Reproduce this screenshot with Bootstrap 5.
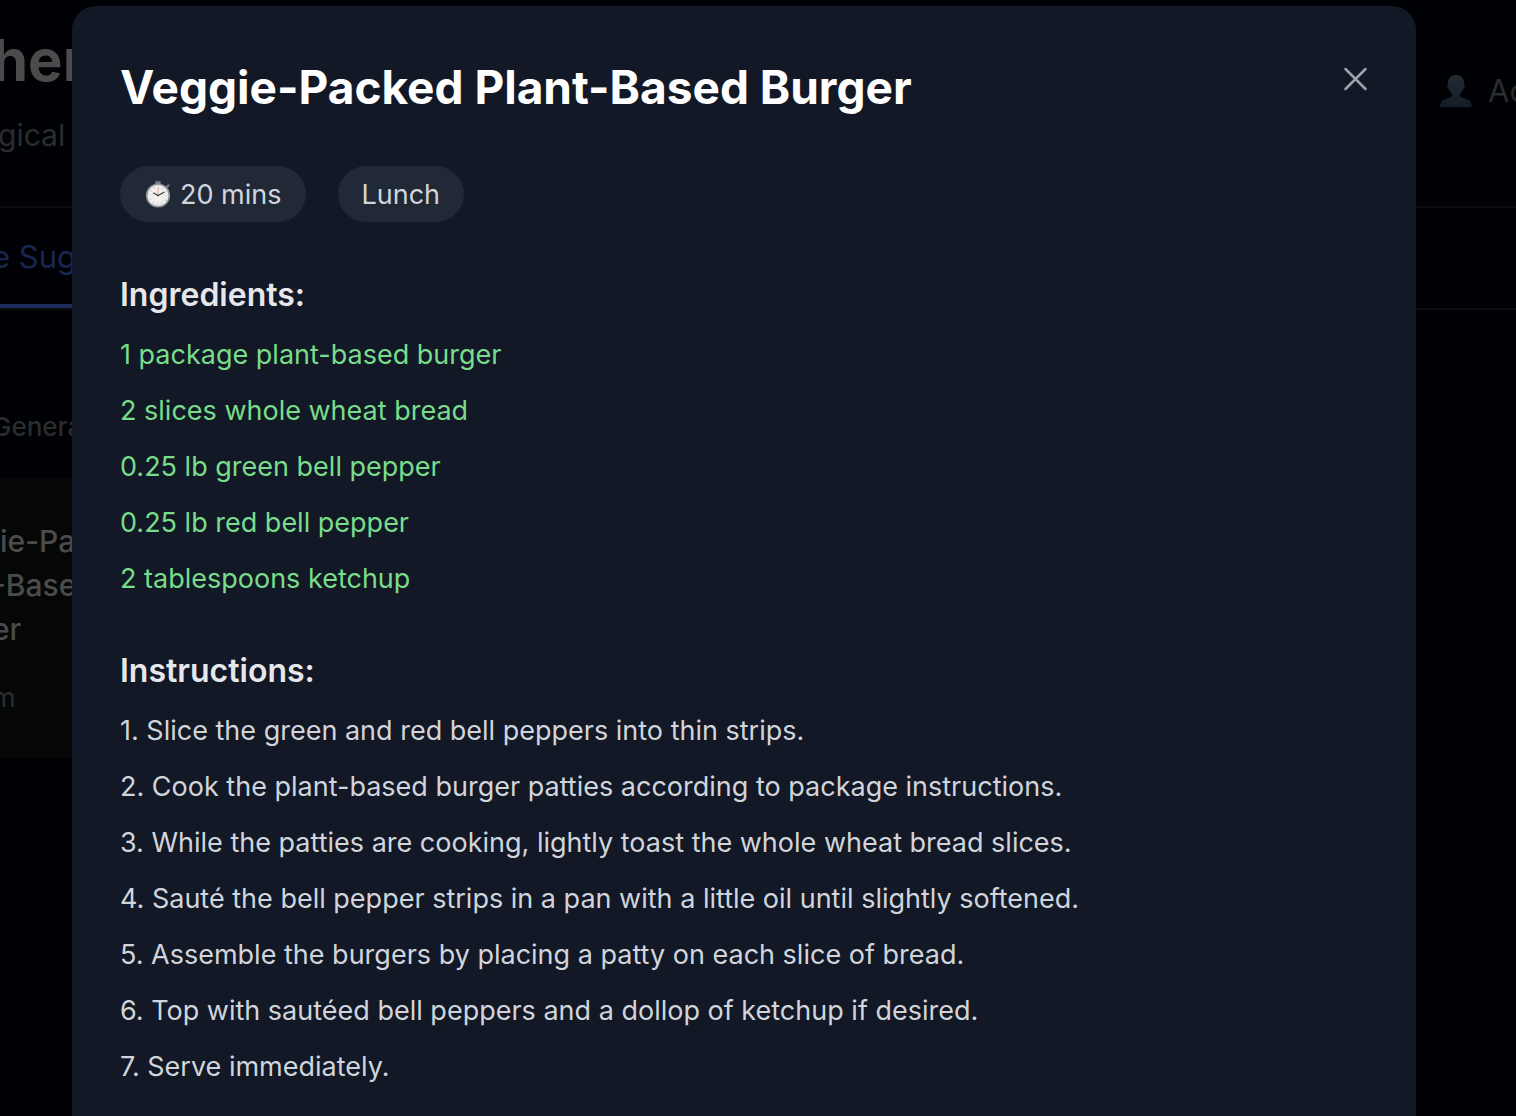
<!DOCTYPE html>
<html lang="en" data-bs-theme="dark">
<head>
<meta charset="utf-8">
<meta name="viewport" content="width=device-width, initial-scale=1">
<title>Veggie-Packed Plant-Based Burger</title>
<link href="https://cdn.jsdelivr.net/npm/bootstrap@5.3.0/dist/css/bootstrap.min.css" rel="stylesheet">
<style>
body { font-family: Inter, "Liberation Sans", sans-serif; font-size: 27px; line-height: 42px; background: #000105; color: #2b2c2e; overflow: hidden; }
.backdrop-page { height: 100vh; overflow: hidden; }
.pull { margin-left: -8px; }
.site-head { height: 208px; border-bottom: 2px solid #0b0c0f; padding-top: 28px; }
.site-name { font-size: 58px; line-height: 64px; font-weight: 700; color: #4b4b4b; margin: 0 0 22px -8px; }
.tagline { font-size: 30px; margin-left: -2px; }
.account { font-size: 31px; gap: 16px; width: 76px; margin-top: 42px; color: #2b2c2e; white-space: nowrap; }
.tabs { height: 102px; border-bottom: 2px solid #0b0c0f; }
.tab-on { font-size: 31px; color: #172750; width: 180px; height: 100px; padding-top: 28px; border-bottom: 4px solid #1b2c5a; white-space: pre; }
.filter { font-size: 26px; margin-top: 96px; margin-bottom: 30px; font-weight: 500; }
.recipe { background: #040706; height: 280px; width: 360px; padding-top: 41px; }
.recipe-name { font-size: 30px; line-height: 44px; font-weight: 500; color: #4b4b4b; margin-bottom: 26px; }
.overlay { position: absolute; inset: 0; padding: 6px 100px 0 72px; overflow: hidden; }
.sheet { background: #121826; border-radius: 24px; padding: 48px; min-height: 120vh; color: #d1d5db; }
.sheet-title { font-size: 46px; line-height: 66px; font-weight: 700; color: #fff; }
.close-x { border: 0; background: none; padding: 0; width: 48px; height: 48px; margin-right: -12px; color: #9ca3af; }
.tags { gap: 32px; margin: 46px 0 48px; }
.tag { background: #222936; border-radius: 28px; padding: 8px 24px 6px; gap: 8px; }
.sec-title { font-size: 32px; line-height: 50px; font-weight: 600; color: #e5e7eb; margin-bottom: 14px; }
.lines { display: flex; flex-direction: column; gap: 14px; margin-bottom: 46px; }
.have { color: #79dc8b; }
</style>
<script src="https://cdn.jsdelivr.net/npm/bootstrap@5.3.0/dist/js/bootstrap.bundle.min.js"></script>
</head>
<body>
<div class="backdrop-page">
  <header class="site-head d-flex justify-content-between align-items-start">
    <div>
      <div class="site-name">her</div>
      <div class="tagline">gical</div>
    </div>
    <a href="#" class="account d-flex align-items-center text-decoration-none">
      <svg class="flex-shrink-0" width="32" height="32" viewBox="0 0 32 32" aria-hidden="true">
        <defs><linearGradient id="person" x1="0" y1="0" x2="0" y2="1"><stop offset="0" stop-color="#232c33"/><stop offset="1" stop-color="#141d26"/></linearGradient></defs>
        <path fill="url(#person)" d="M16 0c5.500 0 8.500 4 8.200 9.500C24.700 9.700 24.800 11 24.300 12.800c-.4 1.300-1 1.400-1.300 1.300-.5 2-1.500 3.500-2.800 4.700-.4 1.700-.2 2.900 1.300 3.700 2.500 1.200 6.500 1.300 8.500 3.700 1.200 1.500 1.700 3.200 1.700 5.800H.3c0-2.600.5-4.300 1.700-5.800 2-2.400 6-2.500 8.500-3.700 1.500-.8 1.700-2 1.300-3.700C10.500 17.600 9.500 16.100 9 14.100c-.3.100-.9 0-1.300-1.300C7.200 11 7.300 9.700 7.800 9.500 7.500 4 10.500 0 16 0Z"/>
      </svg>
      <span>Ac</span>
    </a>
  </header>
  <nav class="tabs"><a href="#" class="tab-on pull d-block text-decoration-none">e Sug</a></nav>
  <div class="filter pull">Genera</div>
  <div class="recipe">
    <div class="recipe-name"><div>ie-Pa</div><div class="pull">-Base</div><div class="pull">er</div></div>
    <div class="pull">m</div>
  </div>
</div>

<div class="overlay">
  <main class="sheet" role="dialog" aria-labelledby="recipe-title">
    <div class="d-flex justify-content-between align-items-start">
      <h1 class="sheet-title mb-0" id="recipe-title">Veggie-Packed Plant-Based Burger</h1>
      <button type="button" class="close-x" aria-label="Close">
        <svg class="d-block" width="48" height="48" viewBox="0 0 48 48" fill="none" stroke="currentColor" stroke-width="2.500" stroke-linecap="round"><path d="M13.500 15l20 20M33.500 15l-20 20"/></svg>
      </button>
    </div>
    <div class="tags d-flex">
      <span class="tag d-flex align-items-center">
        <svg width="28" height="28" viewBox="0 0 28 28" aria-hidden="true">
          <rect x="11" y="0" width="6" height="3.500" rx="1.500" fill="#68727e"/>
          <rect x="12.500" y="2" width="3" height="3" fill="#8b949f"/>
          <path d="M22.500 6l2-1.500" stroke="#68727e" stroke-width="2.500" stroke-linecap="round"/>
          <circle cx="14" cy="14.500" r="11.300" fill="#f0efed" stroke="#8f969d" stroke-width="1.600"/>
          <circle cx="14" cy="14.500" r="8.600" fill="none" stroke="#bbb" stroke-width="1.800" stroke-dasharray=".8 3.700"/>
          <path d="M14 16V6.500" stroke="#e8b09c" stroke-width="1.200"/>
          <path d="M9.500 12L14 14.500l6-3.300" fill="none" stroke="#3c4045" stroke-width="1.100" stroke-linecap="round"/>
        </svg>
        <span>20 mins</span>
      </span>
      <span class="tag">Lunch</span>
    </div>
    <h2 class="sec-title">Ingredients:</h2>
    <ul class="lines have list-unstyled">
      <li>1 package plant-based burger</li>
      <li>2 slices whole wheat bread</li>
      <li>0.25 lb green bell pepper</li>
      <li>0.25 lb red bell pepper</li>
      <li>2 tablespoons ketchup</li>
    </ul>
    <h2 class="sec-title">Instructions:</h2>
    <ul class="lines list-unstyled">
      <li>1. Slice the green and red bell peppers into thin strips.</li>
      <li>2. Cook the plant-based burger patties according to package instructions.</li>
      <li>3. While the patties are cooking, lightly toast the whole wheat bread slices.</li>
      <li>4. Sauté the bell pepper strips in a pan with a little oil until slightly softened.</li>
      <li>5. Assemble the burgers by placing a patty on each slice of bread.</li>
      <li>6. Top with sautéed bell peppers and a dollop of ketchup if desired.</li>
      <li>7. Serve immediately.</li>
    </ul>
  </main>
</div>
</body>
</html>
